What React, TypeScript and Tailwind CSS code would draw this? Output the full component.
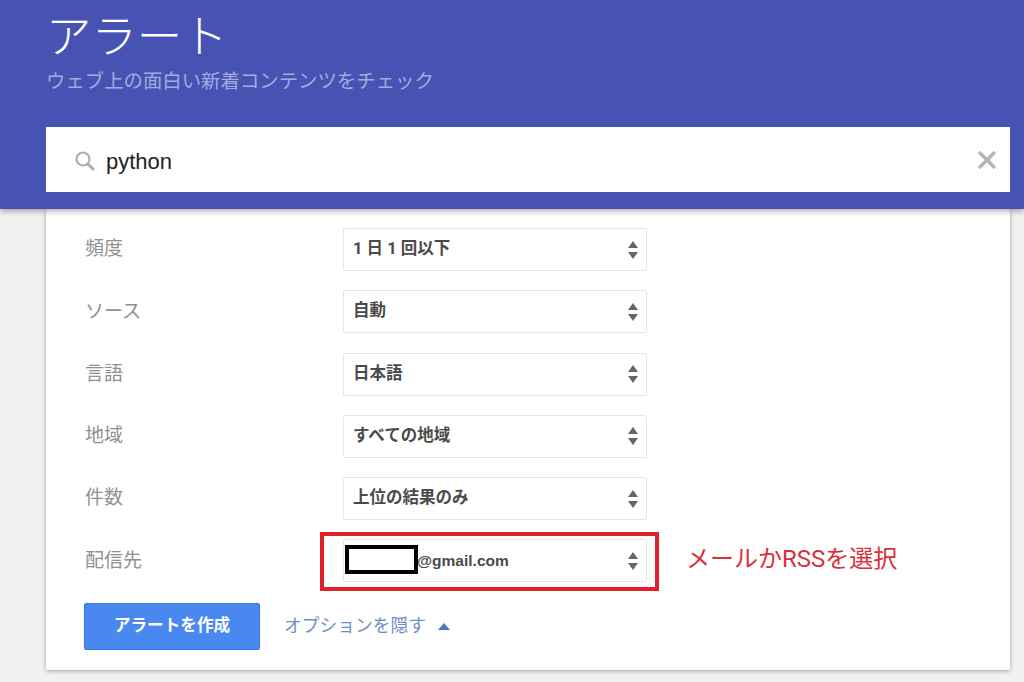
import React from "react";

const rows = [
  { label: "頻度", value: "1 日 1 回以下" },
  { label: "ソース", value: "自動" },
  { label: "言語", value: "日本語" },
  { label: "地域", value: "すべての地域" },
  { label: "件数", value: "上位の結果のみ" },
];

const font = "font-['Roboto','Noto_Sans_CJK_JP',sans-serif]";

function UpDown() {
  return (
    <svg width="12" height="20" viewBox="0 0 12 20" className="shrink-0">
      <path d="M6 1 L11 8 H1 Z M1 12 H11 L6 19 Z" fill="#666" />
    </svg>
  );
}

function Select({ children }: { children: React.ReactNode }) {
  return (
    <div className="flex h-[43px] w-[304px] items-center justify-between rounded-[2px] border border-[#e6e6e6] bg-white pl-[9px] pr-[7px] text-[16.5px] font-bold text-[#4a4a4a]">
      {children}
      <UpDown />
    </div>
  );
}

export default function App() {
  return (
    <div className={`${font} h-[682px] w-[1024px] overflow-hidden bg-[#f1f1f1]`}>
      <header className="relative z-10 h-[209px] bg-[#4753b3] pl-[46px] pr-[14px] shadow-[0_2px_6px_rgba(0,0,0,0.35)]">
        <h1 className="pt-[8px] text-[45.4px] leading-[59px] font-light text-white">アラート</h1>
        <p className="mt-[1px] text-[19.4px] leading-[28px] text-[#a3aade]">ウェブ上の面白い新着コンテンツをチェック</p>
        <div className="mt-[31px] flex h-[65px] items-center bg-white pl-[28px] pr-[13px]">
          <svg width="22" height="22" viewBox="0 0 22 22" className="mt-[2px] shrink-0">
            <circle cx="9" cy="9" r="6.5" fill="none" stroke="#b0b0b0" strokeWidth="2.2" />
            <path d="M13.5 13.5 L20 20" stroke="#b0b0b0" strokeWidth="3" />
          </svg>
          <span className="ml-[10px] flex-1 pt-[4px] font-['Liberation_Sans'] text-[22px] text-[#222]">python</span>
          <svg width="20" height="20" viewBox="0 0 20 20" className="shrink-0">
            <path d="M2 2 L18 18 M18 2 L2 18" stroke="#b4b4b4" strokeWidth="3.4" />
          </svg>
        </div>
      </header>

      <main className="relative ml-[46px] h-[461px] w-[964px] bg-white shadow-[0_1px_4px_rgba(0,0,0,0.35)]">
        <div className="flex flex-col gap-[19.25px] pt-[19px] pl-[39px]">
          {rows.map((r) => (
            <div key={r.label} className="flex items-center">
              <span className="w-[258px] text-[19px] text-[#909090]">{r.label}</span>
              <Select>{r.value}</Select>
            </div>
          ))}
          <div className="flex items-center">
            <span className="w-[258px] text-[19px] text-[#909090]">配信先</span>
            <Select>
              <span className="font-['Liberation_Sans'] pl-[64px] text-[15.5px]">@gmail.com</span>
            </Select>
          </div>
        </div>

        <div className="mt-[21px] flex items-center pl-[38px]">
          <button className="h-[47px] w-[176px] rounded-[2px] border border-[#3b78e7] bg-[#4888ef] text-[16.6px] font-bold text-white">
            アラートを作成
          </button>
          <a className="ml-[24px] text-[17.75px] text-[#6f8fc4]">オプションを隠す</a>
          <svg width="12" height="7" viewBox="0 0 12 7" className="ml-[12px]">
            <path d="M6 0 L12 7 H0 Z" fill="#4a78c2" />
          </svg>
        </div>

        {/* annotation drawn over the screenshot */}
        <div className="absolute top-[323px] left-[274px] h-[59px] w-[339px] border-[4px] border-[#e0202a]" />
        <div className="absolute top-[336px] left-[299px] h-[29px] w-[73px] border-[4px] border-black bg-white" />
        <span className="absolute top-[333px] left-[640px] text-[24px] leading-[34px] text-[#d9303c]">メールかRSSを選択</span>
      </main>
    </div>
  );
}
